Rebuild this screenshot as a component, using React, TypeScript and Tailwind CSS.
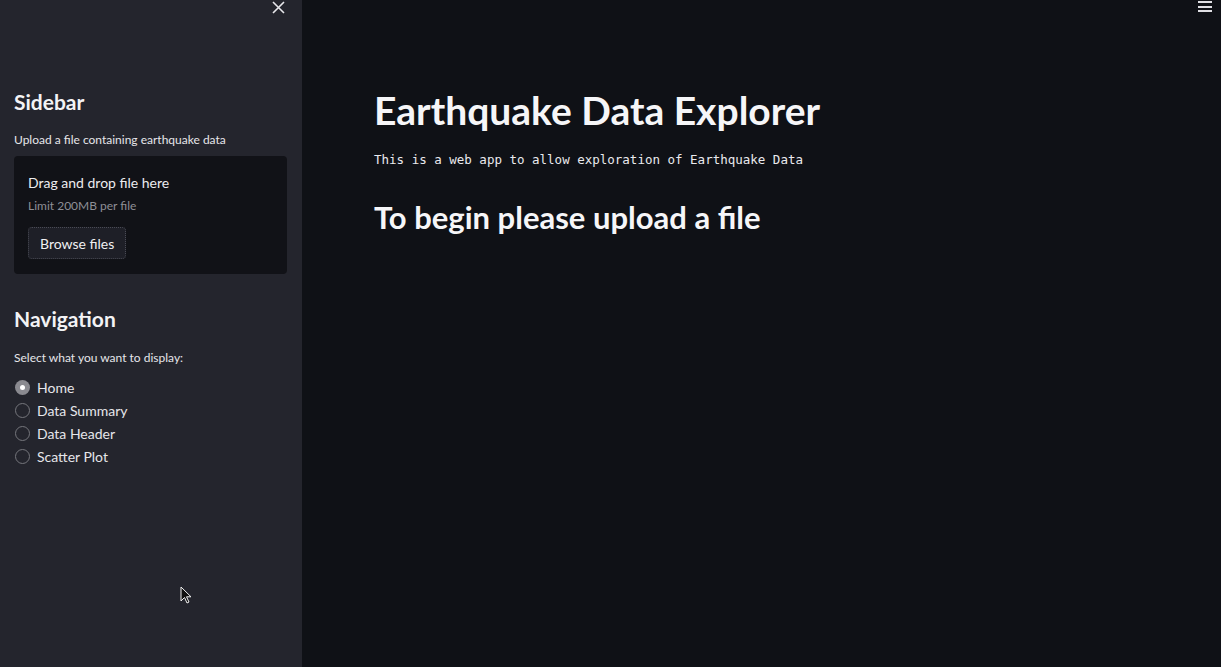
import React from "react";

const sans = { fontFamily: "Lato, 'Noto Sans', sans-serif" };

function Radio({ label, checked }: { label: string; checked?: boolean }) {
  return (
    <div className="flex items-center h-[23px]">
      {checked ? (
        <span className="w-[15px] h-[15px] rounded-full bg-[#8a8a90] flex items-center justify-center">
          <span className="w-[5px] h-[5px] rounded-full bg-white" />
        </span>
      ) : (
        <span className="w-[15px] h-[15px] rounded-full border border-[#75767c]" />
      )}
      <span className="ml-[7px] text-[14px] text-[#e6e6ea]">{label}</span>
    </div>
  );
}

export default function App() {
  return (
    <div className="relative flex w-[1221px] h-[667px] overflow-hidden bg-[#0f1116]" style={sans}>
      <aside className="w-[302px] h-full bg-[#24252d] flex flex-col px-[14px] relative">
        <div className="flex justify-end h-[14px] mt-[1px] pr-[1px]">
          <svg width="13" height="13" viewBox="0 0 13 13" style={{ marginRight: 2 }}>
            <path d="M1 1 L12 12 M12 1 L1 12" stroke="#e8e8ec" strokeWidth="1.6" />
          </svg>
        </div>
        <h2 className="mt-[75px] text-[21px] font-bold text-[#f3f3f5] leading-[24px]">Sidebar</h2>
        <p className="mt-[18px] text-[12px] text-[#e6e6ea] leading-[16px]">Upload a file containing earthquake data</p>
        <div className="mt-[8px] h-[118px] w-[273px] rounded-[4px] bg-[#111217] px-[14px] pt-[18px]">
          <div className="text-[14px] text-[#ececef] leading-[18px]">Drag and drop file here</div>
          <div className="mt-[6px] text-[12px] text-[#8e8f96] leading-[16px]">Limit 200MB per file</div>
          <button className="mt-[13px] h-[32px] px-[11px] rounded-[4px] bg-[#1e1f27] border border-dotted border-[#4a4b55] text-[14px] text-[#f0f0f2]">
            Browse files
          </button>
        </div>
        <h2 className="mt-[33px] text-[21px] font-bold text-[#f3f3f5] leading-[24px]">Navigation</h2>
        <p className="mt-[19px] text-[12px] text-[#e6e6ea] leading-[16px]">Select what you want to display:</p>
        <div className="mt-[10px] flex flex-col pl-[1px]">
          <Radio label="Home" checked />
          <Radio label="Data Summary" />
          <Radio label="Data Header" />
          <Radio label="Scatter Plot" />
        </div>
        <svg className="absolute left-[180px] top-[586px]" width="14" height="20" viewBox="0 0 14 20">
          <path d="M1 1 L1 15 L4.5 11.5 L7 17 L9 16 L6.5 10.8 L11 10.8 Z" fill="#111" stroke="#f0f0f0" strokeWidth="1" />
        </svg>
      </aside>
      <main className="flex-1 relative">
        <div className="absolute right-[9px] top-[1px] flex flex-col gap-[2.5px]">
          <span className="block w-[14px] h-[2px] bg-[#e0e0e4]" />
          <span className="block w-[14px] h-[2px] bg-[#e0e0e4]" />
          <span className="block w-[14px] h-[2px] bg-[#e0e0e4]" />
        </div>
        <div className="pl-[72px] pt-[87px]">
          <h1 className="text-[39px] font-bold text-[#f6f6f8] leading-[46px]">Earthquake Data Explorer</h1>
          <p className="mt-[19px] text-[12.5px] text-[#eaeaee] leading-[16px]" style={{ fontFamily: "'DejaVu Sans Mono', monospace" }}>
            This is a web app to allow exploration of Earthquake Data
          </p>
          <h2 className="mt-[30px] text-[31px] font-bold text-[#f6f6f8] leading-[38px]">To begin please upload a file</h2>
        </div>
      </main>
    </div>
  );
}
